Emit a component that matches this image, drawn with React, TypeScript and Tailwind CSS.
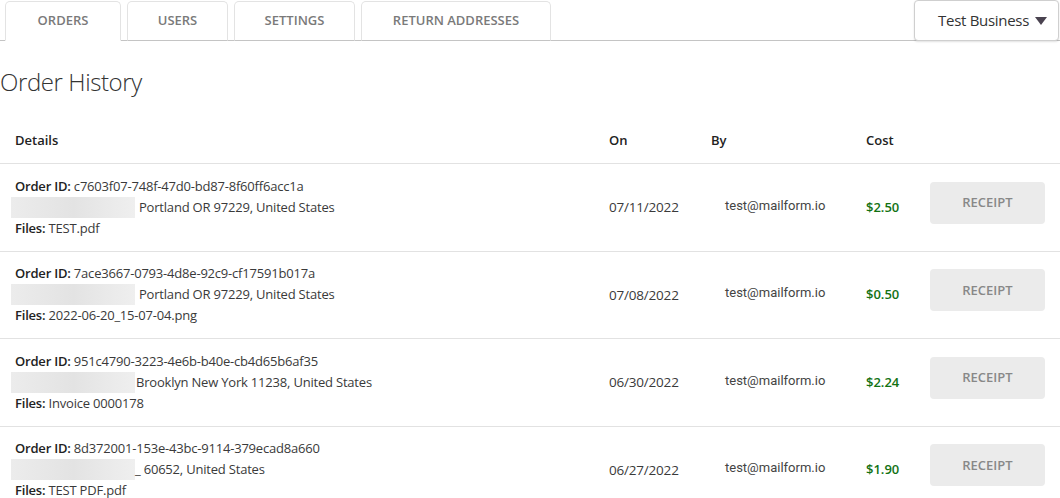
import React from "react";

type Order = {
  id: string;
  addr: string;
  addrGap: string;
  file: string;
  date: string;
  by: string;
  cost: string;
};

const orders: Order[] = [
  { id: "c7603f07-748f-47d0-bd87-8f60ff6acc1a", addr: "Portland OR 97229, United States", addrGap: "ml-1", file: "TEST.pdf", date: "07/11/2022", by: "test@mailform.io", cost: "$2.50" },
  { id: "7ace3667-0793-4d8e-92c9-cf17591b017a", addr: "Portland OR 97229, United States", addrGap: "ml-1", file: "2022-06-20_15-07-04.png", date: "07/08/2022", by: "test@mailform.io", cost: "$0.50" },
  { id: "951c4790-3223-4e6b-b40e-cb4d65b6af35", addr: "Brooklyn New York 11238, United States", addrGap: "ml-px", file: "Invoice 0000178", date: "06/30/2022", by: "test@mailform.io", cost: "$2.24" },
  { id: "8d372001-153e-43bc-9114-379ecad8a660", addr: "_ 60652, United States", addrGap: "ml-0", file: "TEST PDF.pdf", date: "06/27/2022", by: "test@mailform.io", cost: "$1.90" },
];

const tabs = [
  { label: "ORDERS", w: "w-[116px]", active: true },
  { label: "USERS", w: "w-[101px]", active: false },
  { label: "SETTINGS", w: "w-[121px]", active: false },
  { label: "RETURN ADDRESSES", w: "w-[190px]", active: false },
];

export default function App() {
  return (
    <div className="w-[1060px] h-[498px] overflow-hidden bg-white font-['Open_Sans',sans-serif] text-[#333]">
      {/* Top bar */}
      <div className="flex items-end h-[41px] border-b border-[#c4c4c4]">
        <div className="flex items-end gap-[6px] pl-[5px]">
          {tabs.map((t) => (
            <div
              key={t.label}
              className={`${t.w} h-[40px] -mb-px flex items-center justify-center rounded-t-[5px] border border-[#e3e3e3] text-[13px] font-semibold text-[#7a7a7a] ${
                t.active ? "border-b-white bg-white" : "border-b-[#c4c4c4] bg-white"
              }`}
            >
              {t.label}
            </div>
          ))}
        </div>
        <div className="ml-auto mr-px w-[145px] h-[41px] -mb-px flex items-center justify-end gap-[6px] pr-[11px] rounded-[4px] border border-[#cfcfcf] bg-white shadow-[0_1px_2px_rgba(0,0,0,0.12)] text-[15px] tracking-[-0.3px] text-[#333]">
          <span>Test Business</span>
          <svg width="12" height="9" viewBox="0 0 12 9" className="mt-[2px]">
            <polygon points="0,0 12,0 6,8" fill="#4a4350" />
          </svg>
        </div>
      </div>

      {/* Heading */}
      <h1 className="mt-[25px] text-[24px] leading-[32px] font-light text-[#333] tracking-[-0.4px]">
        Order History
      </h1>

      {/* Table header */}
      <div className="mt-[21px] grid grid-cols-[609px_102px_155px_64px_1fr] h-[45px] items-center border-b border-[#e2e2e2] text-[13px] font-semibold text-[#222]">
        <div className="pl-[15px]">Details</div>
        <div>On</div>
        <div>By</div>
        <div>Cost</div>
        <div />
      </div>

      {orders.map((o) => (
        <div
          key={o.id}
          className="grid grid-cols-[609px_102px_155px_64px_115px_1fr] h-[87.5px] items-center border-b border-[#e2e2e2] text-[13px]"
        >
          <div className="pl-[15px] flex flex-col leading-[21px] tracking-[-0.2px]">
            <div>
              <span className="font-semibold text-[#222]">Order ID:</span>{" "}
              <span className="text-[#3a3a3a]">{o.id}</span>
            </div>
            <div className="flex items-center -ml-1">
              <div className="w-[124px] h-[21px] bg-gradient-to-r from-[#ececec] via-[#e3e3e3] to-[#efefef]" />
              <span className={`${o.addrGap} text-[#3a3a3a]`}>{o.addr}</span>
            </div>
            <div>
              <span className="font-semibold text-[#222]">Files:</span>{" "}
              <span className="text-[#3a3a3a]">{o.file}</span>
            </div>
          </div>
          <div className="text-[#3a3a3a] text-[13.5px] tracking-[-0.2px]">{o.date}</div>
          <div className="pl-[14px] mb-[4px] font-['Roboto',sans-serif] text-[13px] text-[#444]">{o.by}</div>
          <div className="font-semibold text-[#137213]">{o.cost}</div>
          <div className="mb-[9px]">
            <div className="h-[42px] w-[115px] rounded-[4px] bg-[#ebebeb] flex items-center justify-center text-[13px] font-semibold text-[#888]">
              RECEIPT
            </div>
          </div>
          <div />
        </div>
      ))}
    </div>
  );
}
